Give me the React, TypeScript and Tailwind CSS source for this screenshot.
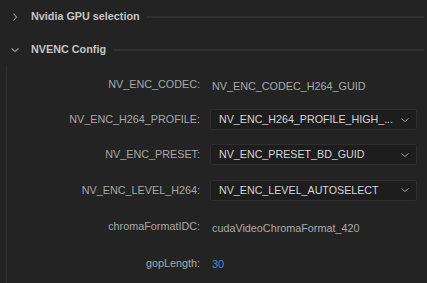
import React from 'react';

const Chevron = ({ open }: { open: boolean }) => (
  <svg width="10" height="10" viewBox="0 0 10 10" className="shrink-0">
    {open ? (
      <path d="M1.5 3.5 L5 6.5 L8.5 3.5" fill="none" stroke="#9a9a9a" strokeWidth="1.1" />
    ) : (
      <path d="M3.5 1.5 L6.5 5 L3.5 8.5" fill="none" stroke="#9a9a9a" strokeWidth="1.1" />
    )}
  </svg>
);

const SectionHeader = ({ title, open }: { title: string; open: boolean }) => (
  <div className="flex items-center h-[33px] pl-[10px] pr-[3px]">
    <div className="w-[10px] flex justify-center">
      <Chevron open={open} />
    </div>
    <span className="ml-[11px] text-[10.8px] font-bold text-[#c6c6c6] whitespace-nowrap">{title}</span>
    <div className="flex-1 ml-[7px] h-[2px] bg-[#303030]" />
  </div>
);

const Select = ({ value }: { value: string }) => (
  <div className="flex items-center h-[21px] w-[207px] bg-[#1d1d1d] border border-[#2e2e2e] rounded-[2px] pl-[8px] pr-[6px]">
    <span className="flex-1 text-[10.7px] text-[#d6d6d6] whitespace-nowrap overflow-hidden">{value}</span>
    <svg width="10" height="10" viewBox="0 0 10 10">
      <path d="M1.5 3.5 L5 6.5 L8.5 3.5" fill="none" stroke="#a0a0a0" strokeWidth="1" />
    </svg>
  </div>
);

type Row = { label: string; kind: 'text' | 'select' | 'num'; value: string; h: string };

const rows: Row[] = [
  { label: 'NV_ENC_CODEC:', kind: 'text', value: 'NV_ENC_CODEC_H264_GUID', h: 'h-[35px]' },
  { label: 'NV_ENC_H264_PROFILE:', kind: 'select', value: 'NV_ENC_H264_PROFILE_HIGH_...', h: 'h-[35px]' },
  { label: 'NV_ENC_PRESET:', kind: 'select', value: 'NV_ENC_PRESET_BD_GUID', h: 'h-[35px]' },
  { label: 'NV_ENC_LEVEL_H264:', kind: 'select', value: 'NV_ENC_LEVEL_AUTOSELECT', h: 'h-[36px]' },
  { label: 'chromaFormatIDC:', kind: 'text', value: 'cudaVideoChromaFormat_420', h: 'h-[37px]' },
  { label: 'gopLength:', kind: 'num', value: '30', h: 'h-[36px]' },
];

export default function App() {
  return (
    <div
      className="w-[427px] h-[283px] bg-[#232323] overflow-hidden"
      style={{ fontFamily: '"Liberation Sans", Arial, sans-serif' }}
    >
      <SectionHeader title="Nvidia GPU selection" open={false} />
      <SectionHeader title="NVENC Config" open={true} />
      <div className="ml-[6px] border-l border-[#2e2e2e] pt-[1px] pb-[20px]">
        {rows.map((r) => (
          <div key={r.label} className={`flex items-center ${r.h}`}>
            <div className="w-[193px] text-right text-[10.8px] text-[#a8a8a8] whitespace-nowrap">{r.label}</div>
            <div className="ml-[10px]">
              {r.kind === 'select' ? (
                <Select value={r.value} />
              ) : r.kind === 'num' ? (
                <span className="pl-[2px] text-[11px] text-[#3f8fdc]">{r.value}</span>
              ) : (
                <span className="pl-[2px] text-[10.8px] text-[#aaaaaa] whitespace-nowrap">{r.value}</span>
              )}
            </div>
          </div>
        ))}
      </div>
    </div>
  );
}
